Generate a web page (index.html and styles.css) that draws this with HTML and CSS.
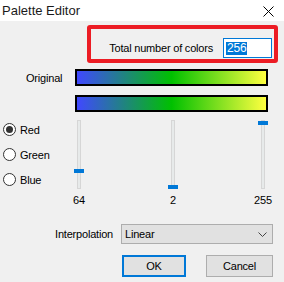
FILE: index.html
```html
<!DOCTYPE html>
<html lang="en">
<head>
  <meta charset="UTF-8">
  <title>Palette Editor</title>
  <link rel="stylesheet" href="styles.css">
</head>
<body>
  <header class="titlebar">
    <span class="title">Palette Editor</span>
    <svg class="close" width="11" height="11" viewBox="0 0 11 11">
      <path d="M0.5 0.5 L10.5 10.5 M10.5 0.5 L0.5 10.5" stroke="#000" stroke-width="1" fill="none"/>
    </svg>
  </header>

  <div class="countbox">
    <span>Total number of colors</span>
    <div class="field"><span class="sel">256</span></div>
  </div>

  <div class="bars">
    <span class="label">Original</span>
    <div class="grad"></div>
    <span></span>
    <div class="grad"></div>
  </div>

  <div class="mixer">
    <div class="channels">
      <label class="channel"><span class="radio checked"></span>Red</label>
      <label class="channel"><span class="radio"></span>Green</label>
      <label class="channel"><span class="radio"></span>Blue</label>
    </div>
    <div class="slider s1">
      <div class="track"><div class="thumb" style="top: 48px"></div></div>
      <span class="value">64</span>
    </div>
    <div class="slider s2">
      <div class="track"><div class="thumb" style="top: 64px"></div></div>
      <span class="value">2</span>
    </div>
    <div class="slider s3">
      <div class="track"><div class="thumb" style="top: 0px"></div></div>
      <span class="value">255</span>
    </div>
  </div>

  <div class="interp">
    <span>Interpolation</span>
    <div class="select">
      <span>Linear</span>
      <svg width="9" height="5" viewBox="0 0 9 5">
        <path d="M0.5 0.5 L4.5 4.5 L8.5 0.5" stroke="#444" stroke-width="1" fill="none"/>
      </svg>
    </div>
  </div>

  <div class="buttons">
    <button class="btn default">OK</button>
    <button class="btn cancel">Cancel</button>
  </div>
</body>
</html>
```

FILE: styles.css
```css
body { margin: 0; width: 284px; height: 282px; overflow: hidden; background: #f0f0f0; font-family: "Liberation Sans", Arial, sans-serif; font-size: 11px; letter-spacing: -0.2px; color: #000; }

.titlebar { height: 21px; background: #fff; display: flex; align-items: center; justify-content: space-between; padding: 0 10px 0 2px; }
.title { font-size: 13px; letter-spacing: 0; color: #1a1a1a; }
.close { margin-top: 1px; }

.countbox { box-sizing: border-box; width: 191px; height: 38px; margin: 4px 0 0 87px; border: 4px solid #ec1c24; border-radius: 3px; display: flex; justify-content: flex-end; align-items: center; gap: 10px; padding: 8px 2px 0 0; }
.field { box-sizing: border-box; width: 49px; height: 20px; background: #fff; border: 1px solid #0078d7; display: flex; align-items: center; padding-left: 2px; }
.sel { background: #0078d7; color: #fff; line-height: 13px; padding: 0 1px; font-size: 12px; }

.bars { display: grid; grid-template-columns: 75px 193px; row-gap: 9px; align-items: center; margin-top: 6px; }
.label { padding-left: 26px; }
.grad { box-sizing: border-box; height: 17px; border: 2px solid #000; background: linear-gradient(to right, #4048ff 0%, #00c000 50%, #ffff40 100%); }

.mixer { display: grid; grid-template-columns: 64px 30px 64px 30px 60px 30px; margin-top: 8px; }
.channels { display: flex; flex-direction: column; gap: 12px; padding: 3px 0 0 3px; }
.channel { display: flex; align-items: center; gap: 4px; height: 13px; }
.radio { box-sizing: border-box; width: 13px; height: 13px; border: 1px solid #333; border-radius: 50%; background: #fff; display: flex; align-items: center; justify-content: center; }
.radio.checked::after { content: ""; width: 7px; height: 7px; border-radius: 50%; background: #333; }

.s1 { grid-column: 2; }
.s2 { grid-column: 4; }
.s3 { grid-column: 6; }
.slider { display: flex; flex-direction: column; align-items: center; }
.track { position: relative; box-sizing: border-box; width: 4px; height: 69px; background: #e7eaea; border: 1px solid #d6d6d6; }
.thumb { position: absolute; left: -4px; width: 10px; height: 4px; background: #0078d7; }
.value { margin-top: 5px; line-height: 13px; }

.interp { display: flex; justify-content: flex-end; align-items: center; gap: 8px; padding-right: 11px; margin-top: 17px; }
.select { box-sizing: border-box; width: 152px; height: 20px; background: #e1e1e1; border: 1px solid #adadad; display: flex; align-items: center; justify-content: space-between; padding: 0 5px 0 3px; }

.buttons { display: flex; justify-content: flex-end; gap: 20px; padding-right: 11px; margin-top: 11px; }
.btn { box-sizing: border-box; height: 22px; background: #e1e1e1; font-family: inherit; font-size: 11px; letter-spacing: -0.2px; color: #000; padding: 0; }
.btn.default { width: 64px; border: 2px solid #0078d7; }
.btn.cancel { width: 67px; border: 1px solid #adadad; }
```
